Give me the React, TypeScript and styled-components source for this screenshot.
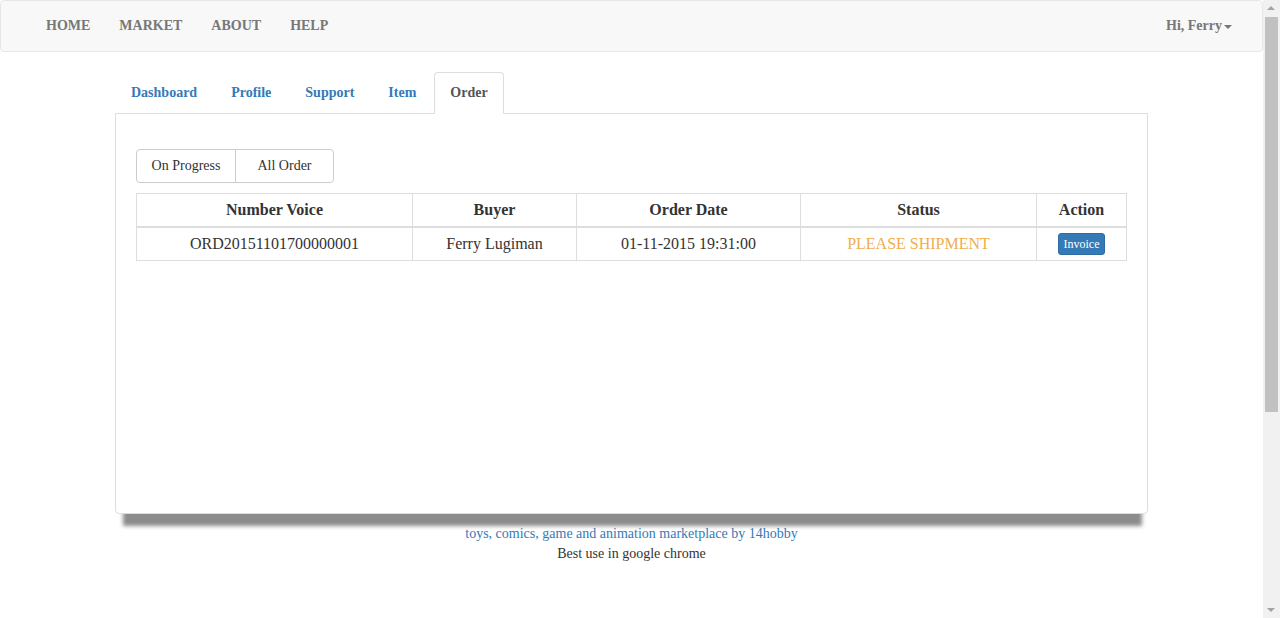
import styled, { createGlobalStyle } from "styled-components";

const GlobalStyle = createGlobalStyle`
  html, body {
    margin: 0;
    padding: 0;
    overflow: hidden;
    background: #fff;
  }
  body {
    font-family: "Liberation Serif", "Times New Roman", serif;
    font-size: 14px;
    line-height: 20px;
    color: #333;
  }
`;

const Page = styled.div`
  width: calc(100vw - 17px);
  min-height: 618px;
`;

const Navbar = styled.nav`
  display: flex;
  align-items: center;
  justify-content: space-between;
  background: #f8f8f8;
  border: 1px solid #e7e7e7;
  border-radius: 4px;
  box-sizing: border-box;
  height: 52px;
  padding: 0 30px 0 30px;
`;

const NavList = styled.div`
  display: flex;
`;

const NavLink = styled.a`
  display: block;
  padding: 15px 14px 15px 15px;
  font-weight: bold;
  color: #777;
  text-decoration: none;
`;

const UserMenu = styled.a`
  display: flex;
  align-items: center;
  font-weight: bold;
  color: #777;
  padding: 15px 0;
`;

const Caret = styled.span`
  display: inline-block;
  width: 0;
  height: 0;
  margin-left: 2px;
  margin-top: 2px;
  border-top: 4px solid #777;
  border-left: 4px solid transparent;
  border-right: 4px solid transparent;
`;

const Container = styled.div`
  width: 1033px;
  margin: 20px auto 0;
`;

const Tabs = styled.ul`
  display: flex;
  list-style: none;
  margin: 0;
  padding: 0;
  position: relative;
  z-index: 1;
`;

const TabLink = styled.a<{ $active?: boolean }>`
  display: block;
  margin-right: 2px;
  margin-bottom: -1px;
  padding: 10px 15px;
  font-weight: bold;
  text-decoration: none;
  border: 1px solid ${(p) => (p.$active ? "#ddd" : "transparent")};
  border-bottom-color: ${(p) => (p.$active ? "#fff" : "transparent")};
  border-radius: 4px 4px 0 0;
  background: ${(p) => (p.$active ? "#fff" : "transparent")};
  color: ${(p) => (p.$active ? "#555" : "#337ab7")};
`;

const Panel = styled.div`
  height: 401px;
  box-sizing: border-box;
  border: 1px solid #ddd;
  border-radius: 0 0 4px 4px;
  padding: 35px 20px 20px;
  background: #fff;
  box-shadow: 1px 19px 4px -7px #8c8c8c;
`;

const ButtonGroup = styled.div`
  display: flex;
`;

const GroupButton = styled.button<{ $w: number; $first?: boolean }>`
  width: ${(p) => p.$w}px;
  height: 34px;
  font-family: inherit;
  font-size: 14px;
  color: #333;
  background: #fff;
  border: 1px solid #ccc;
  margin-left: ${(p) => (p.$first ? 0 : -1)}px;
  border-radius: ${(p) => (p.$first ? "4px 0 0 4px" : "0 4px 4px 0")};
  padding: 0;
`;

const Table = styled.table`
  width: 990px;
  margin-top: 10px;
  border-collapse: collapse;
  table-layout: fixed;
  font-size: 16px;
`;

const Th = styled.th<{ $w: number }>`
  box-sizing: border-box;
  width: ${(p) => p.$w}px;
  height: 33px;
  padding: 0 8px;
  border: 1px solid #ddd;
  border-bottom: 2px solid #ddd;
  font-weight: bold;
  text-align: center;
  color: #333;
`;

const Td = styled.td<{ $status?: boolean }>`
  height: 32px;
  padding: 0 8px;
  border: 1px solid #ddd;
  text-align: center;
  color: ${(p) => (p.$status ? "#f0ad4e" : "#333")};
`;

const InvoiceButton = styled.button`
  font-family: inherit;
  font-size: 12px;
  line-height: 18px;
  padding: 1px 5px;
  color: #fff;
  background: #337ab7;
  border: 1px solid #2e6da4;
  border-radius: 3px;
  vertical-align: middle;
`;

const Footer = styled.div`
  text-align: center;
  padding-top: 10px;
`;

const FooterLink = styled.a`
  display: block;
  color: #337ab7;
  text-decoration: none;
`;

const FooterNote = styled.div`
  color: #333;
`;

const Scrollbar = styled.div`
  position: fixed;
  top: 0;
  right: 0;
  width: 17px;
  height: 100vh;
  background: #f1f1f1;
`;

const ScrollArrow = styled.div<{ $down?: boolean }>`
  position: absolute;
  left: 4px;
  ${(p) => (p.$down ? "bottom: 6px;" : "top: 6px;")}
  width: 0;
  height: 0;
  border-left: 4px solid transparent;
  border-right: 4px solid transparent;
  ${(p) =>
    p.$down ? "border-top: 4px solid #a3a3a3;" : "border-bottom: 4px solid #a3a3a3;"}
`;

const ScrollThumb = styled.div`
  position: absolute;
  left: 2px;
  top: 17px;
  width: 13px;
  height: 395px;
  background: #c1c1c1;
`;

const navItems = ["HOME", "MARKET", "ABOUT", "HELP"];
const tabs = ["Dashboard", "Profile", "Support", "Item", "Order"];
const columns: [string, number][] = [
  ["Number Voice", 276],
  ["Buyer", 164],
  ["Order Date", 224],
  ["Status", 236],
  ["Action", 90],
];

export default function App() {
  return (
    <Page>
      <GlobalStyle />
      <Navbar>
        <NavList>
          {navItems.map((n) => (
            <NavLink key={n}>{n}</NavLink>
          ))}
        </NavList>
        <UserMenu>
          Hi, Ferry
          <Caret />
        </UserMenu>
      </Navbar>
      <Container>
        <Tabs>
          {tabs.map((t) => (
            <li key={t}>
              <TabLink $active={t === "Order"}>{t}</TabLink>
            </li>
          ))}
        </Tabs>
        <Panel>
          <ButtonGroup>
            <GroupButton $w={100} $first>
              On Progress
            </GroupButton>
            <GroupButton $w={99}>All Order</GroupButton>
          </ButtonGroup>
          <Table>
            <thead>
              <tr>
                {columns.map(([c, w]) => (
                  <Th key={c} $w={w}>
                    {c}
                  </Th>
                ))}
              </tr>
            </thead>
            <tbody>
              <tr>
                <Td>ORD20151101700000001</Td>
                <Td>Ferry Lugiman</Td>
                <Td>01-11-2015 19:31:00</Td>
                <Td $status>PLEASE SHIPMENT</Td>
                <Td>
                  <InvoiceButton>Invoice</InvoiceButton>
                </Td>
              </tr>
            </tbody>
          </Table>
        </Panel>
        <Footer>
          <FooterLink>toys, comics, game and animation marketplace by 14hobby</FooterLink>
          <FooterNote>Best use in google chrome</FooterNote>
        </Footer>
      </Container>
      <Scrollbar>
        <ScrollArrow />
        <ScrollThumb />
        <ScrollArrow $down />
      </Scrollbar>
    </Page>
  );
}
